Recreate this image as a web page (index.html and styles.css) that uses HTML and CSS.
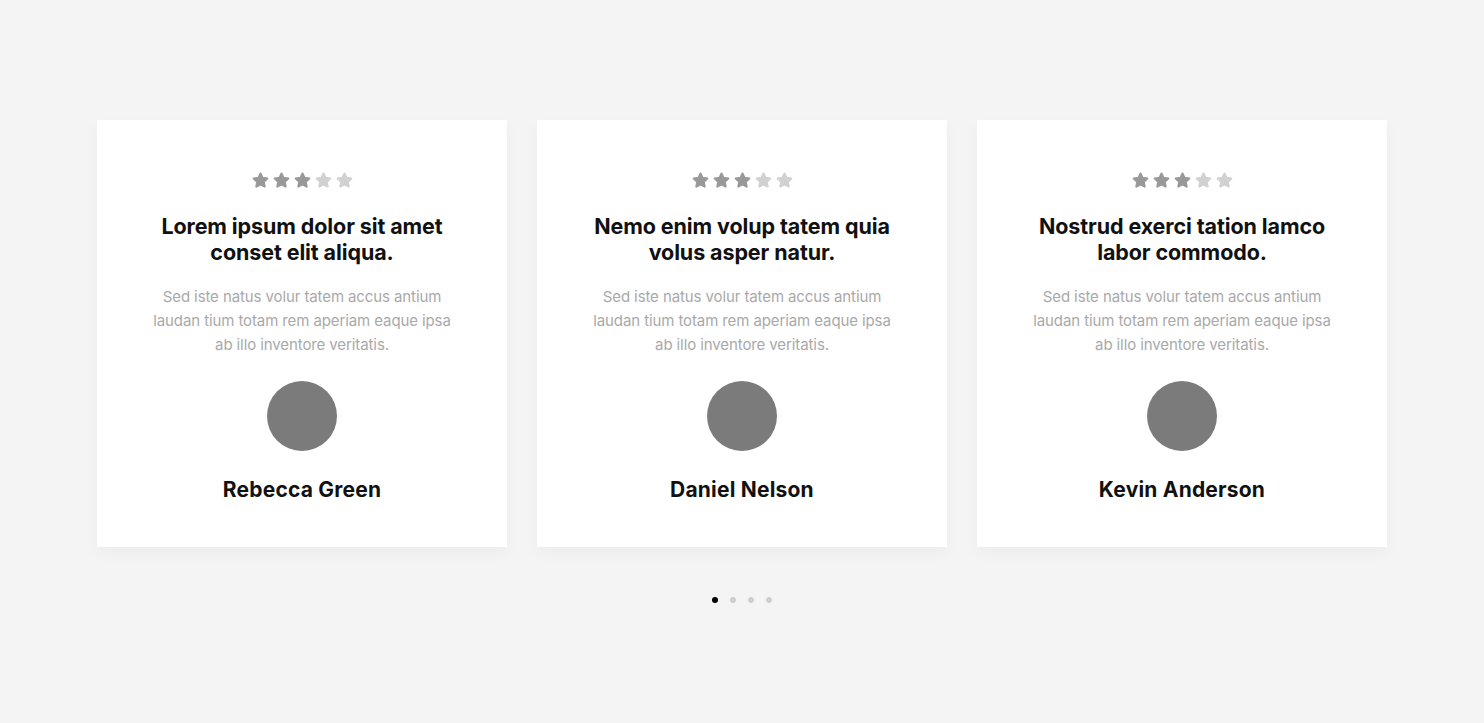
FILE: index.html
```html
<!DOCTYPE html>
<html lang="en">
<head>
<meta charset="utf-8">
<title>Testimonials</title>
<link rel="stylesheet" href="styles.css">
</head>
<body>
<section class="testimonials">
  <div class="cards">
    <article class="card">
      <div class="stars">
        <svg class="star on" viewBox="0 0 24 24"><path d="M12 3.2l2.6 5.5 6 .8-4.4 4.2 1.1 6L12 16.8l-5.3 2.9 1.1-6-4.4-4.2 6-.8z"/></svg>
        <svg class="star on" viewBox="0 0 24 24"><path d="M12 3.2l2.6 5.5 6 .8-4.4 4.2 1.1 6L12 16.8l-5.3 2.9 1.1-6-4.4-4.2 6-.8z"/></svg>
        <svg class="star on" viewBox="0 0 24 24"><path d="M12 3.2l2.6 5.5 6 .8-4.4 4.2 1.1 6L12 16.8l-5.3 2.9 1.1-6-4.4-4.2 6-.8z"/></svg>
        <svg class="star" viewBox="0 0 24 24"><path d="M12 3.2l2.6 5.5 6 .8-4.4 4.2 1.1 6L12 16.8l-5.3 2.9 1.1-6-4.4-4.2 6-.8z"/></svg>
        <svg class="star" viewBox="0 0 24 24"><path d="M12 3.2l2.6 5.5 6 .8-4.4 4.2 1.1 6L12 16.8l-5.3 2.9 1.1-6-4.4-4.2 6-.8z"/></svg>
      </div>
      <h3 class="title">Lorem ipsum dolor sit amet conset elit aliqua.</h3>
      <p class="text">Sed iste natus volur tatem accus antium laudan tium totam rem aperiam eaque ipsa ab illo inventore veritatis.</p>
      <div class="avatar"></div>
      <h4 class="name">Rebecca Green</h4>
    </article>
    <article class="card">
      <div class="stars">
        <svg class="star on" viewBox="0 0 24 24"><path d="M12 3.2l2.6 5.5 6 .8-4.4 4.2 1.1 6L12 16.8l-5.3 2.9 1.1-6-4.4-4.2 6-.8z"/></svg>
        <svg class="star on" viewBox="0 0 24 24"><path d="M12 3.2l2.6 5.5 6 .8-4.4 4.2 1.1 6L12 16.8l-5.3 2.9 1.1-6-4.4-4.2 6-.8z"/></svg>
        <svg class="star on" viewBox="0 0 24 24"><path d="M12 3.2l2.6 5.5 6 .8-4.4 4.2 1.1 6L12 16.8l-5.3 2.9 1.1-6-4.4-4.2 6-.8z"/></svg>
        <svg class="star" viewBox="0 0 24 24"><path d="M12 3.2l2.6 5.5 6 .8-4.4 4.2 1.1 6L12 16.8l-5.3 2.9 1.1-6-4.4-4.2 6-.8z"/></svg>
        <svg class="star" viewBox="0 0 24 24"><path d="M12 3.2l2.6 5.5 6 .8-4.4 4.2 1.1 6L12 16.8l-5.3 2.9 1.1-6-4.4-4.2 6-.8z"/></svg>
      </div>
      <h3 class="title">Nemo enim volup tatem quia volus asper natur.</h3>
      <p class="text">Sed iste natus volur tatem accus antium laudan tium totam rem aperiam eaque ipsa ab illo inventore veritatis.</p>
      <div class="avatar"></div>
      <h4 class="name">Daniel Nelson</h4>
    </article>
    <article class="card">
      <div class="stars">
        <svg class="star on" viewBox="0 0 24 24"><path d="M12 3.2l2.6 5.5 6 .8-4.4 4.2 1.1 6L12 16.8l-5.3 2.9 1.1-6-4.4-4.2 6-.8z"/></svg>
        <svg class="star on" viewBox="0 0 24 24"><path d="M12 3.2l2.6 5.5 6 .8-4.4 4.2 1.1 6L12 16.8l-5.3 2.9 1.1-6-4.4-4.2 6-.8z"/></svg>
        <svg class="star on" viewBox="0 0 24 24"><path d="M12 3.2l2.6 5.5 6 .8-4.4 4.2 1.1 6L12 16.8l-5.3 2.9 1.1-6-4.4-4.2 6-.8z"/></svg>
        <svg class="star" viewBox="0 0 24 24"><path d="M12 3.2l2.6 5.5 6 .8-4.4 4.2 1.1 6L12 16.8l-5.3 2.9 1.1-6-4.4-4.2 6-.8z"/></svg>
        <svg class="star" viewBox="0 0 24 24"><path d="M12 3.2l2.6 5.5 6 .8-4.4 4.2 1.1 6L12 16.8l-5.3 2.9 1.1-6-4.4-4.2 6-.8z"/></svg>
      </div>
      <h3 class="title">Nostrud exerci tation lamco labor commodo.</h3>
      <p class="text">Sed iste natus volur tatem accus antium laudan tium totam rem aperiam eaque ipsa ab illo inventore veritatis.</p>
      <div class="avatar"></div>
      <h4 class="name">Kevin Anderson</h4>
    </article>
  </div>
  <div class="dots">
    <span class="dot active"></span>
    <span class="dot"></span>
    <span class="dot"></span>
    <span class="dot"></span>
  </div>
</section>
</body>
</html>
```

FILE: styles.css
```css
* { box-sizing: border-box; }
html, body {
  margin: 0;
  padding: 0;
  background: #f4f4f4;
  font-family: Inter, "Noto Sans", sans-serif;
}
.testimonials {
  padding-top: 120px;
  display: flex;
  flex-direction: column;
  align-items: center;
}
.cards {
  display: flex;
  gap: 30px;
  width: 1290px;
}
.card {
  width: 410px;
  height: 427px;
  background: #fff;
  box-shadow: 0 6px 14px rgba(0, 0, 0, 0.035);
  display: flex;
  flex-direction: column;
  align-items: center;
  padding: 51px 55px 0;
  text-align: center;
}
.stars {
  display: flex;
  gap: 2px;
  height: 19px;
}
.star {
  width: 19px;
  height: 19px;
  fill: #d1d1d1;
  stroke: #d1d1d1;
  stroke-width: 2.6;
  stroke-linejoin: round;
}
.star.on { fill: #999999; stroke: #999999; }
.title {
  margin: 23px 0 0;
  font-size: 21.5px;
  line-height: 26px;
  font-weight: 700;
  color: #111;
  letter-spacing: -0.1px;
}
.text {
  margin: 20px 0 0;
  font-size: 15px;
  line-height: 24px;
  color: #a9a9a9;
  width: 300px;
  letter-spacing: -0.1px;
}
.avatar {
  margin-top: 24px;
  width: 70px;
  height: 70px;
  border-radius: 50%;
  background: #7b7b7c;
  flex: none;
}
.name {
  margin: 26px 0 0;
  font-size: 21px;
  line-height: 26px;
  font-weight: 700;
  color: #111;
  letter-spacing: 0.2px;
}
.dots {
  margin-top: 50px;
  display: flex;
  gap: 12px;
}
.dot {
  width: 6px;
  height: 6px;
  border-radius: 50%;
  background: #cfcfcf;
}
.dot.active { background: #000; }
```
